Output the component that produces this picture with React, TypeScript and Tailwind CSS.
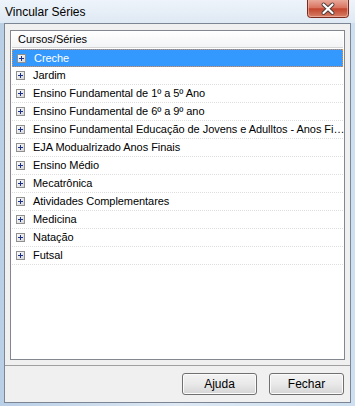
import React from "react";

const items = [
  "Creche",
  "Jardim",
  "Ensino Fundamental de 1º a 5º Ano",
  "Ensino Fundamental de 6º a 9º ano",
  "Ensino Fundamental Educação de Jovens e Adulltos - Anos Fi…",
  "EJA Modualrizado Anos Finais",
  "Ensino Médio",
  "Mecatrônica",
  "Atividades Complementares",
  "Medicina",
  "Natação",
  "Futsal",
];

function PlusBox() {
  return (
    <svg width="9" height="9" viewBox="0 0 9 9" className="shrink-0">
      <defs>
        <linearGradient id="pb" x1="0" y1="0" x2="1" y2="1">
          <stop offset="0" stopColor="#ffffff" />
          <stop offset="1" stopColor="#d4d4d4" />
        </linearGradient>
      </defs>
      <rect x="0.5" y="0.5" width="8" height="8" fill="url(#pb)" stroke="#8f8f8f" />
      <path d="M2 4.5H7M4.5 2V7" stroke="#1b2f8a" strokeWidth="1" />
    </svg>
  );
}

function CloseButton() {
  return (
    <svg width="42" height="18" viewBox="0 0 42 18">
      <defs>
        <linearGradient id="cb" x1="0" y1="0" x2="0" y2="1">
          <stop offset="0" stopColor="#e9a99a" />
          <stop offset="0.45" stopColor="#d9735f" />
          <stop offset="0.5" stopColor="#c2452e" />
          <stop offset="1" stopColor="#d8826a" />
        </linearGradient>
      </defs>
      <path d="M0.5 0V14.5Q0.5 17.5 3.5 17.5H38.5Q41.5 17.5 41.5 14.5V0" fill="url(#cb)" stroke="#7a2a1e" />
      <path d="M1.5 0V14Q1.5 16.5 4 16.5H38Q40.5 16.5 40.5 14V0" fill="none" stroke="#f3c3b6" strokeOpacity="0.6" />
      <path d="M16.5 4.5L25.5 13M25.5 4.5L16.5 13" stroke="#4a3a38" strokeWidth="4" strokeLinecap="round" />
      <path d="M16.5 4.5L25.5 13M25.5 4.5L16.5 13" stroke="#ffffff" strokeWidth="2.2" strokeLinecap="round" />
    </svg>
  );
}

function Btn({ label }: { label: string }) {
  return (
    <button className="w-[75px] h-[22px] rounded-[3px] border border-[#707070] bg-gradient-to-b from-[#f3f3f3] via-[#e9e9e9] to-[#d5d5d5] text-[12px] text-black shadow-[inset_0_0_0_1px_#fbfbfb] leading-none">
      {label}
    </button>
  );
}

export default function App() {
  return (
    <div
      className="w-[355px] h-[406px] bg-gradient-to-r from-[#b9cfe6] via-[#dde8f3] to-[#cddff0] flex flex-col overflow-hidden"
      style={{ fontFamily: '"Liberation Sans", Arial, sans-serif' }}
    >
      <div className="h-[23px] flex items-start justify-between shrink-0 bg-gradient-to-b from-[#eef4fa] to-[#dfe9f4]">
        <div className="pl-[5px] pt-[6px] text-[12px] text-black leading-none">Vincular Séries</div>
        <div className="mr-[6px]">
          <CloseButton />
        </div>
      </div>
      <div className="mx-[4px] mb-[3px] flex-1 border border-[#7b8593] bg-[#f0f0f0] flex flex-col">
        <div className="mx-[5px] mt-[6px] h-[330px] border border-[#828790] bg-white flex flex-col">
          <div className="h-[17px] mx-px border-b border-[#d5d5d5] bg-gradient-to-b from-white to-[#f3f4f6] text-[11px] leading-[17px] text-black pl-[6px]">
            Cursos/Séries
          </div>
          <div className="pt-px flex flex-col">
            {items.map((t, i) => {
              const sel = i === 0;
              return (
                <div key={t} className="h-[18px] pl-px pr-px">
                  <div
                    className={
                      sel
                        ? "h-[18px] flex items-center bg-[#3399ff] border border-dotted border-[#f08a3c] text-white"
                        : "h-[18px] flex items-center border-b border-dotted border-[#dedede] text-black"
                    }
                  >
                    <div className="pl-[4px] pr-[8px] flex items-center">
                      <PlusBox />
                    </div>
                    <div className="text-[11px] whitespace-nowrap tracking-[-0.05px]">
                      {t}
                    </div>
                  </div>
                </div>
              );
            })}
          </div>
        </div>
        <div className="mt-[5px] flex-1 border-t border-[#a0a0a0] flex items-start justify-end pr-[6px] pt-[7px] gap-[12px]">
          <Btn label="Ajuda" />
          <Btn label="Fechar" />
        </div>
      </div>
    </div>
  );
}
